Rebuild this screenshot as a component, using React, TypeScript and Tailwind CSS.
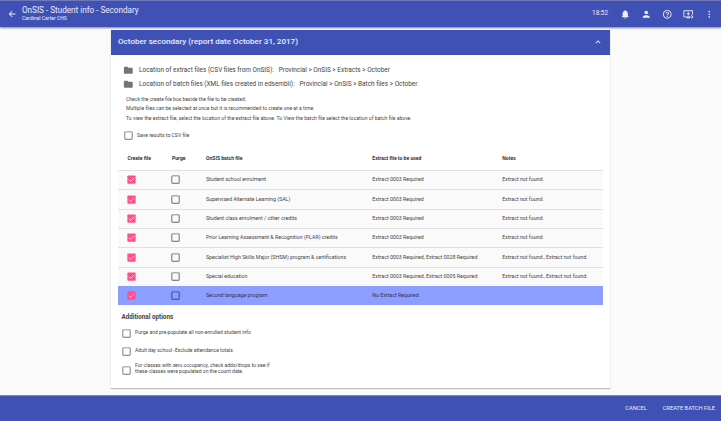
import type { ReactNode } from "react";
import {
  MdArrowBack,
  MdNotifications,
  MdPerson,
  MdHelpOutline,
  MdQueuePlayNext,
  MdMoreVert,
  MdKeyboardArrowUp,
  MdFolder,
  MdCheckBoxOutlineBlank,
} from "react-icons/md";

const ROWS = [
  ["Student school enrolment", "Extract 0003 Required", "Extract not found."],
  ["Supervised Alternate Learning (SAL)", "Extract 0003 Required", "Extract not found."],
  ["Student class enrolment / other credits", "Extract 0003 Required", "Extract not found."],
  ["Prior Learning Assessment & Recognition (PLAR) credits", "Extract 0003 Required", "Extract not found."],
  ["Specialist High Skills Major (SHSM) program & certifications", "Extract 0003 Required, Extract 0028 Required", "Extract not found., Extract not found."],
  ["Special education", "Extract 0003 Required, Extract 0005 Required", "Extract not found., Extract not found."],
  ["Second language program", "No Extract Required.", ""],
];

const COLUMNS = "grid grid-cols-[44.5px_34px_166.3px_130px_1fr] items-center pl-[9.5px]";

function CheckedBox() {
  return (
    <svg viewBox="0 0 24 24" className="-mt-[0.5px] -ml-[1.5px] size-[11px]">
      <rect x="3" y="3" width="18" height="18" rx="2" fill="#ff4f8c" />
      <path d="M6.5 12.5l3.7 3.7L17.8 8.4" fill="none" stroke="#ffe3ee" strokeWidth="2" />
    </svg>
  );
}

function Location({ label, path }: { label: string; path: string }) {
  return (
    <div className="flex h-[14px] items-center text-[6.45px] text-[#444]">
      <MdFolder className="mr-[5.5px] size-[10.6px] text-[#757575]" />
      <span className="mr-[5px] pt-[1.2px]">{label}</span>
      <span className="pt-[1.2px]">{path}</span>
    </div>
  );
}

function Option({ children }: { children: ReactNode }) {
  return (
    <div className="flex h-[18.2px] items-center text-[5.05px] leading-[5.9px] text-[#444]">
      <MdCheckBoxOutlineBlank className="mt-[2px] mr-[3px] size-[11px] text-[#757575]" />
      <div>{children}</div>
    </div>
  );
}

export default function App() {
  return (
    <div className="flex h-[421px] w-[721px] flex-col overflow-hidden whitespace-nowrap bg-[#fafafa] font-['Roboto',sans-serif]">
      <header className="z-10 flex h-[26.5px] shrink-0 items-center border-t border-[#6f78b8] bg-[#3f51b5] pl-[7px] text-white/90 shadow-[0_1px_2px_rgba(0,0,0,0.5)]">
        <MdArrowBack className="size-[10px]" />
        <div className="ml-[5px] grow pb-[1px]">
          <div className="text-[8.15px] leading-[9px]">OnSIS - Student info - Secondary</div>
          <div className="text-[5.05px] leading-[6px]">Cardinal Carter CHS</div>
        </div>
        <span className="mr-[12px] text-[6.4px]">18:52</span>
        <div className="flex items-center gap-[10.5px] pr-[6.5px]">
          <MdNotifications className="size-[10.5px]" />
          <MdPerson className="size-[10.5px]" />
          <MdHelpOutline className="size-[10.5px]" />
          <MdQueuePlayNext className="size-[10.5px]" />
          <MdMoreVert className="size-[10.5px]" />
        </div>
      </header>

      <main className="grow px-[111px] pt-[3px]">
        <section className="h-[358.5px] w-[499px] bg-white shadow-[0_1px_1px_rgba(0,0,0,0.25)]">
          <div className="flex h-[25.5px] items-center justify-between bg-[#3f51b5] pr-[7px] pl-[7px] text-white/90">
            <h1 className="text-[8px] font-medium tracking-[0.04px]">October secondary (report date October 31, 2017)</h1>
            <MdKeyboardArrowUp className="size-[10px]" />
          </div>

          <div className="pt-[8px] pl-[12px]">
            <Location label="Location of extract files (CSV files from OnSIS):" path="Provincial > OnSIS > Extracts > October" />
            <Location label="Location of batch files (XML files created in edsembli):" path="Provincial > OnSIS > Batch files > October" />
            <div className="mt-[3.5px] pl-[3px] text-[5.09px] leading-[9.8px] text-[#444]">
              <p>Check the create file box beside the file to be created.</p>
              <p>Multiple files can be selected at once but it is recommended to create one at a time.</p>
              <p>To view the extract file, select the location of the extract file above. To View the batch file select the location of batch file above.</p>
            </div>
            <div className="mt-[6.5px] flex items-center text-[5.1px] text-[#444]">
              <MdCheckBoxOutlineBlank className="mr-[3px] size-[11px] text-[#757575]" />
              Save results to CSV file
            </div>
          </div>

          <div className="mt-[5.5px] ml-[7px] w-[485px] text-[5.25px] text-[#444]">
            <div className={`${COLUMNS} h-[23px] text-[5.05px] font-bold text-[#333]`}>
              <span>Create file</span>
              <span>Purge</span>
              <span>OnSIS batch file</span>
              <span>Extract file to be used</span>
              <span>Notes</span>
            </div>
            {ROWS.map(([name, extract, note], i) => (
              <div
                key={name}
                className={`${COLUMNS} h-[19.33px] border-t ${i === 6 ? "border-[#8c9eff] bg-[#8c9eff] text-[#2c3358]" : "border-[#e0e0e0] bg-[#fafafa]"}`}
              >
                <CheckedBox />
                <MdCheckBoxOutlineBlank className={`-mt-[0.5px] -ml-[2px] size-[11px] ${i === 6 ? "text-[#39427a]" : "text-[#666]"}`} />
                <span className="pt-[0.6px]">{name}</span>
                <span className="pt-[0.6px]">{extract}</span>
                <span className="pt-[0.6px]">{note}</span>
              </div>
            ))}
          </div>

          <div className="pt-[7.5px] pl-[10px]">
            <h2 className="mb-[2px] pl-[0.5px] text-[6.3px] leading-[9px] font-bold text-[#444]">Additional options</h2>
            <Option>Purge and pre-populate all non-enrolled student info</Option>
            <Option>Adult day school -Exclude attendance totals</Option>
            <Option>
              For classes with zero occupancy, check adds/drops to see if
              <br />
              these classes were populated on the count date.
            </Option>
          </div>
        </section>
      </main>

      <footer className="flex h-[26px] shrink-0 items-center justify-end gap-[16px] border-t border-[#7c86c4] bg-[#3f51b5] pr-[6px] text-[5.7px] text-white/90">
        <span>CANCEL</span>
        <span>CREATE BATCH FILE</span>
      </footer>
    </div>
  );
}
